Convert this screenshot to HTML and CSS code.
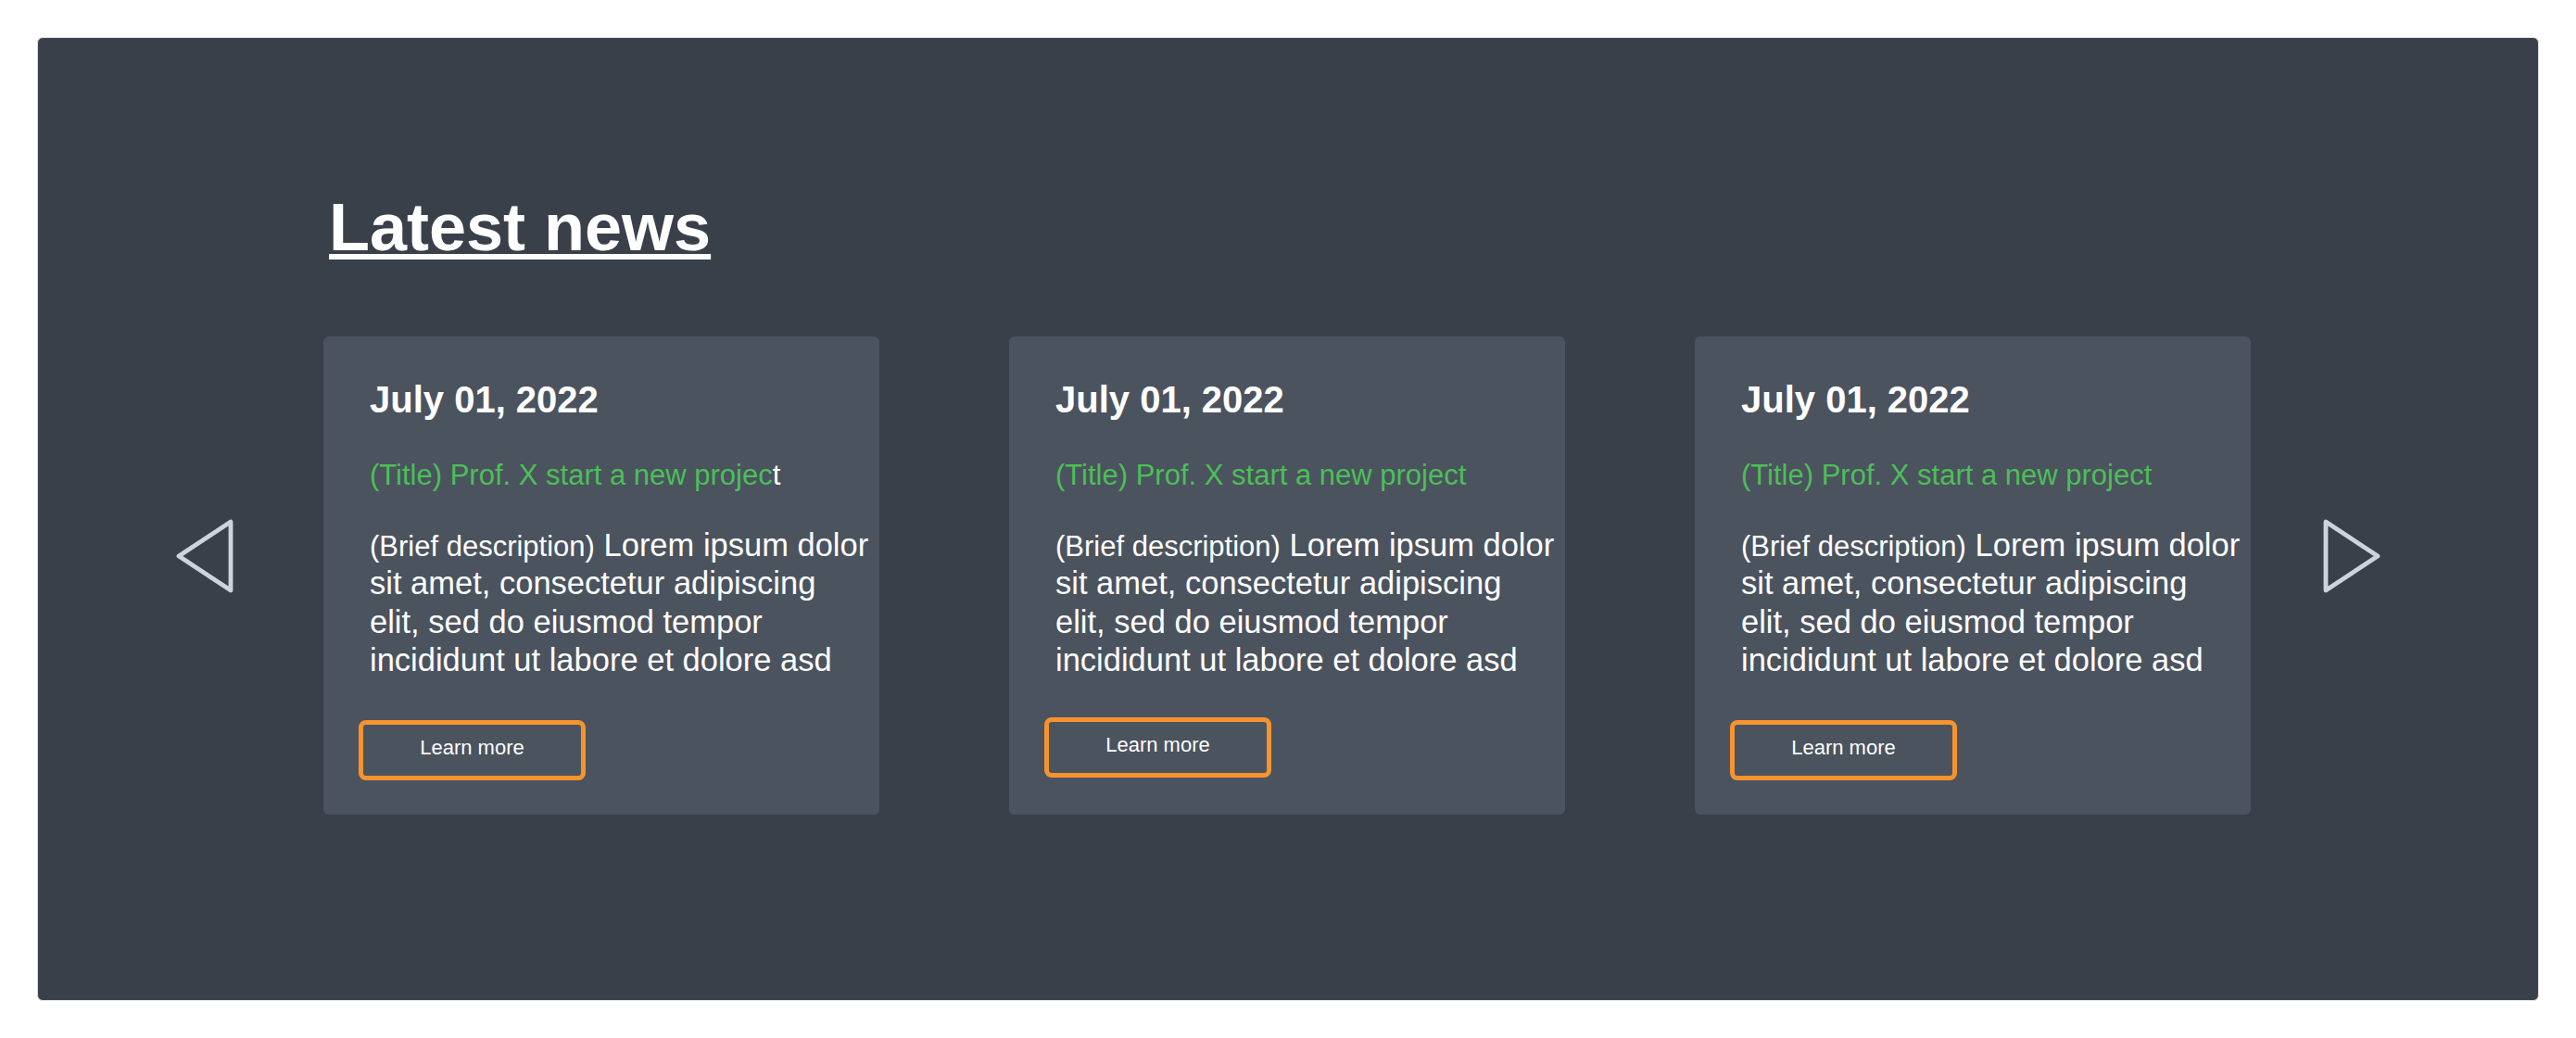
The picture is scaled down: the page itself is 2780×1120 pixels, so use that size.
FILE: index.html
```html
<!DOCTYPE html>
<html lang="en">
<head>
<meta charset="utf-8">
<title>Latest news</title>
<link rel="stylesheet" href="styles.css">
</head>
<body>
<section class="news">
  <h2 class="news-title">Latest news</h2>
  <div class="carousel">
    <button class="arrow arrow-prev" aria-label="Previous">
      <svg width="62" height="80" viewBox="0 0 62 80"><path d="M59 3 L59 77 L3 40 Z"/></svg>
    </button>
    <div class="cards">
      <article class="card">
        <h3 class="card-date">July 01, 2022</h3>
        <p class="card-title">(Title) Prof. X start a new projec<span class="card-title-end">t</span></p>
        <p class="card-desc"><span class="card-desc-label">(Brief description)</span> Lorem ipsum dolor sit amet, consectetur adipiscing elit, sed do eiusmod tempor incididunt ut labore et dolore asd</p>
        <button class="card-btn">Learn more</button>
      </article>
      <article class="card">
        <h3 class="card-date">July 01, 2022</h3>
        <p class="card-title">(Title) Prof. X start a new project</p>
        <p class="card-desc"><span class="card-desc-label">(Brief description)</span> Lorem ipsum dolor sit amet, consectetur adipiscing elit, sed do eiusmod tempor incididunt ut labore et dolore asd</p>
        <button class="card-btn card-btn-up">Learn more</button>
      </article>
      <article class="card">
        <h3 class="card-date">July 01, 2022</h3>
        <p class="card-title">(Title) Prof. X start a new project</p>
        <p class="card-desc"><span class="card-desc-label">(Brief description)</span> Lorem ipsum dolor sit amet, consectetur adipiscing elit, sed do eiusmod tempor incididunt ut labore et dolore asd</p>
        <button class="card-btn">Learn more</button>
      </article>
    </div>
    <button class="arrow arrow-next" aria-label="Next">
      <svg width="62" height="80" viewBox="0 0 62 80"><path d="M3 3 L3 77 L59 40 Z"/></svg>
    </button>
  </div>
</section>
</body>
</html>
```

FILE: styles.css
```css
html, body {
  margin: 0;
  padding: 0;
  background: #ffffff;
}

body {
  padding: 40px;
  font-family: "Liberation Sans", Arial, Helvetica, sans-serif;
  color: #ffffff;
}

.news {
  box-sizing: border-box;
  height: 1040px;
  background: #3a404a;
  border: 1px solid #dde1e6;
  border-radius: 6px;
  padding: 164px 0 0 149px;
}

.news-title {
  margin: 0 0 0 165px;
  font-size: 72px;
  line-height: 80px;
  font-weight: 700;
  color: #ffffff;
  text-decoration: underline;
  text-decoration-thickness: 6px;
  text-underline-offset: 4px;
}

.carousel {
  display: flex;
  align-items: flex-start;
  margin-top: 78px;
}

.arrow {
  flex: none;
  width: 62px;
  height: 80px;
  padding: 0;
  margin: 197px 0 0;
  border: 0;
  background: none;
  cursor: pointer;
  display: block;
}

.arrow svg {
  display: block;
}

.arrow path {
  fill: none;
  stroke: #cdd4de;
  stroke-width: 4.8;
  stroke-linejoin: round;
}

.arrow-prev {
  margin-right: 97px;
}

.arrow-next {
  margin-left: 78px;
}

.cards {
  display: flex;
  gap: 140px;
}

.card {
  box-sizing: border-box;
  width: 600px;
  height: 516px;
  padding: 45px 9px 0 50px;
  background: #4b535e;
  border-radius: 6px;
  display: flex;
  flex-direction: column;
  align-items: flex-start;
}

.card-date {
  margin: 0;
  font-size: 40px;
  line-height: 46px;
  font-weight: 700;
}

.card-title {
  margin: 41px 0 0;
  font-size: 31px;
  line-height: 36px;
  color: #4cbf58;
}

.card-title-end {
  color: #ffffff;
}

.card-desc {
  margin: 37px 0 0;
  font-size: 34.5px;
  line-height: 41.3px;
}

.card-desc-label {
  font-size: 31px;
  line-height: 1;
}

.card-btn {
  box-sizing: border-box;
  width: 245px;
  height: 65px;
  margin: 44px 0 0 -12px;
  padding: 0 0 6px;
  border: 5px solid #f7932f;
  border-radius: 8px;
  background: transparent;
  color: #ffffff;
  font-family: inherit;
  font-size: 22px;
  line-height: 24px;
  display: flex;
  align-items: center;
  justify-content: center;
  cursor: pointer;
}

.card-btn-up {
  margin-top: 41px;
}
```
